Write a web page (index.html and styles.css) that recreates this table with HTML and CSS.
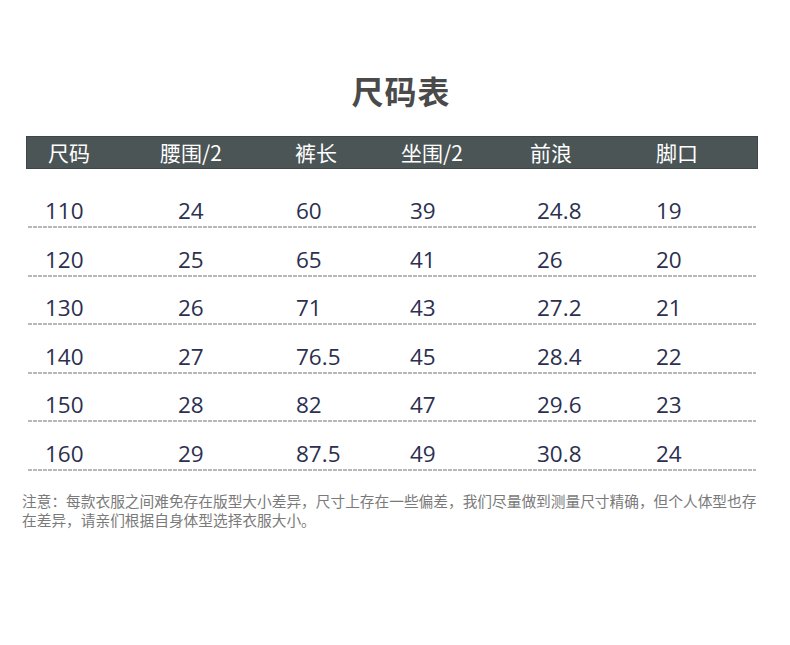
FILE: index.html
```html
<!DOCTYPE html>
<html lang="zh-CN">
<head>
<meta charset="utf-8">
<title>尺码表</title>
<link rel="stylesheet" href="styles.css">
</head>
<body>
<div class="page">
  <h1 class="title">尺码表</h1>
  <div class="head">
    <span>尺码</span><span>腰围/2</span><span>裤长</span><span>坐围/2</span><span>前浪</span><span>脚口</span>
  </div>
  <div class="rows">
    <div class="row"><span>110</span><span>24</span><span>60</span><span>39</span><span>24.8</span><span>19</span></div>
    <div class="row"><span>120</span><span>25</span><span>65</span><span>41</span><span>26</span><span>20</span></div>
    <div class="row"><span>130</span><span>26</span><span>71</span><span>43</span><span>27.2</span><span>21</span></div>
    <div class="row"><span>140</span><span>27</span><span>76.5</span><span>45</span><span>28.4</span><span>22</span></div>
    <div class="row"><span>150</span><span>28</span><span>82</span><span>47</span><span>29.6</span><span>23</span></div>
    <div class="row"><span>160</span><span>29</span><span>87.5</span><span>49</span><span>30.8</span><span>24</span></div>
  </div>
  <p class="note">注意：每款衣服之间难免存在版型大小差异，尺寸上存在一些偏差，我们尽量做到测量尺寸精确，但个人体型也存在差异，请亲们根据自身体型选择衣服大小。</p>
</div>
</body>
</html>
```

FILE: styles.css
```css
html, body {
  margin: 0;
  padding: 0;
  background: #ffffff;
}

.page {
  width: 790px;
  font-family: "Noto Sans CJK SC", "Noto Sans", sans-serif;
}

.title {
  margin: 70px 0 0 0;
  padding-left: 12px;
  text-align: center;
  font-size: 32px;
  line-height: 40px;
  font-weight: 700;
  color: #4a4a4a;
  letter-spacing: 1px;
}

.head {
  margin: 26px 0 0 26px;
  width: 732px;
  height: 33px;
  box-sizing: border-box;
  background: #4b5556;
  border: 1px solid #3d4546;
  display: grid;
  grid-template-columns: 112px 135px 106px 129px 126px 1fr;
  align-items: center;
  padding-left: 21px;
  color: #ffffff;
  font-size: 21px;
  line-height: 31px;
}

.rows {
  margin: 10.5px 0 0 28px;
  width: 728px;
}

.row {
  height: 48.5px;
  box-sizing: border-box;
  display: grid;
  grid-template-columns: 133px 118px 114px 127px 119px 1fr;
  align-items: end;
  padding: 0 0 2px 17px;
  font-family: "Open Sans", "Noto Sans", sans-serif;
  font-size: 22.5px;
  line-height: 30px;
  color: #2c2f4f;
  background-image: repeating-linear-gradient(90deg, #b8b8b8 0 4px, transparent 4px 5px);
  background-size: 100% 2px;
  background-position: left bottom;
  background-repeat: no-repeat;
}

.note {
  margin: 20px 0 0 22px;
  width: 738px;
  font-size: 14.7px;
  line-height: 19px;
  color: #7a7a7a;
}
```
